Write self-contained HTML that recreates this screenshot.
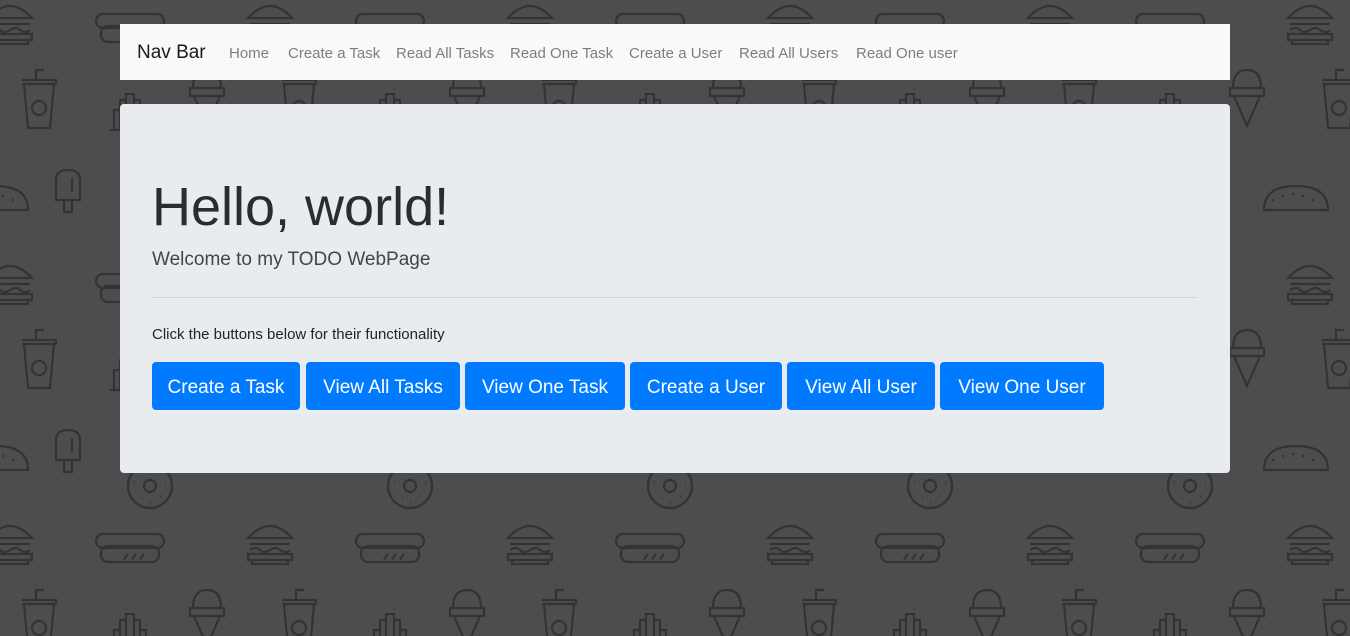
<!DOCTYPE html>
<html><head><meta charset="utf-8">
<style>
*{box-sizing:border-box;margin:0;padding:0}
body{width:1350px;height:636px;overflow:hidden;background:#4d4d50;font-family:"Liberation Sans",sans-serif;position:relative}
#bg{position:absolute;left:0;top:0}
.nav{position:absolute;left:120px;top:24px;width:1110px;height:56px;background:#f8f9fa}
.nav span{position:absolute;top:21px;font-size:15px;color:rgba(0,0,0,.5);white-space:nowrap}
.nav .brand{top:18px;font-size:19px;color:rgba(0,0,0,.9)}
.jumbo{position:absolute;left:120px;top:104px;width:1110px;height:369px;background:#e9ecef;border-radius:4px}
.jumbo .t{position:absolute;white-space:nowrap;color:#212529}
.btn{position:absolute;top:258px;height:48px;background:#007bff;color:#fff;border-radius:4px;font-size:19px;text-align:center;line-height:52px;white-space:nowrap}
</style></head><body>
<svg id="bg" width="1350" height="636">
<defs><pattern id="p" width="260" height="260" patternUnits="userSpaceOnUse" x="0" y="0">
<g fill="none" stroke="#333" stroke-width="2.2">
<g transform="translate(-14,0)"><path d="M2 18 Q24 -6 46 18 Z M4 24 H44 M4 30 Q10 26 14 30 Q18 34 24 30 Q30 26 34 30 Q40 34 44 30 M2 34 H46 V40 H2 Z M6 40 V44 H42 V40"/></g>
<g transform="translate(246,0)"><path d="M2 18 Q24 -6 46 18 Z M4 24 H44 M4 30 Q10 26 14 30 Q18 34 24 30 Q30 26 34 30 Q40 34 44 30 M2 34 H46 V40 H2 Z M6 40 V44 H42 V40"/></g>
<g transform="translate(96,14)"><rect x="0" y="0" width="68" height="14" rx="7"/><rect x="5" y="12" width="58" height="16" rx="7"/><path d="M28 26 Q30 22 32 20 M36 26 Q38 22 40 20 M44 26 Q46 22 48 20"/></g>
<g transform="translate(22,70)"><path d="M0 14 H34 M2 14 L6 58 H28 L32 14 M0 10 H34 V14 M14 10 V0 H22"/><circle cx="17" cy="38" r="7"/></g>
<g transform="translate(110,90)"><path d="M0 40 H40 M4 40 V20 H10 V40 M10 40 V10 H16 V40 M16 40 V4 H24 V40 M24 40 V10 H30 V40 M30 40 V20 H36 V40"/></g>
<g transform="translate(190,68)"><path d="M3 20 Q3 2 17 2 Q31 2 31 20 M0 20 H34 V28 H0 Z M4 28 L17 58 L30 28 M10 20 H24"/></g>
<g transform="translate(56,170)"><path d="M0 30 V10 Q0 0 12 0 Q24 0 24 10 V30 H0 Z M8 30 V42 H16 V30 M16 8 V22"/></g>
<g transform="translate(150,226)"><circle r="22"/><circle r="6"/><path d="M-16 -4 h1 M-10 -14 h1 M8 -15 h1 M15 -3 h1 M10 10 h1 M-8 12 h1 M0 16 h1"/></g>
<g transform="translate(224,186)"><path d="M0 24 Q0 0 32 0 Q64 0 64 24 Z M8 14 h2 M18 10 h2 M28 8 h2 M38 10 h2 M48 14 h2"/></g>
<g transform="translate(-36,186)"><path d="M0 24 Q0 0 32 0 Q64 0 64 24 Z M8 14 h2 M18 10 h2 M28 8 h2 M38 10 h2 M48 14 h2"/></g>
</g></pattern></defs>
<rect width="1350" height="636" fill="url(#p)"/>
</svg>
<div class="nav">
<span class="brand" style="left:17px">Nav Bar</span>
<span style="left:109px">Home</span>
<span style="left:168px">Create a Task</span>
<span style="left:276px">Read All Tasks</span>
<span style="left:390px">Read One Task</span>
<span style="left:509px">Create a User</span>
<span style="left:619px">Read All Users</span>
<span style="left:736px">Read One user</span>
</div>
<div class="jumbo">
<div class="t" style="left:32px;top:72px;font-size:54px;color:#2a2d30">Hello, world!</div>
<div class="t" style="left:32px;top:145px;font-size:19px;color:#3f4650">Welcome to my TODO WebPage</div>
<div style="position:absolute;left:32px;top:193px;width:1045px;height:1px;background:#cfd3d7"></div>
<div class="t" style="left:32px;top:222px;font-size:15px">Click the buttons below for their functionality</div>
<div class="btn" style="left:32px;width:148px">Create a Task</div>
<div class="btn" style="left:186px;width:154px">View All Tasks</div>
<div class="btn" style="left:345px;width:160px">View One Task</div>
<div class="btn" style="left:510px;width:152px">Create a User</div>
<div class="btn" style="left:667px;width:148px">View All User</div>
<div class="btn" style="left:820px;width:164px">View One User</div>
</div>
</body></html>
